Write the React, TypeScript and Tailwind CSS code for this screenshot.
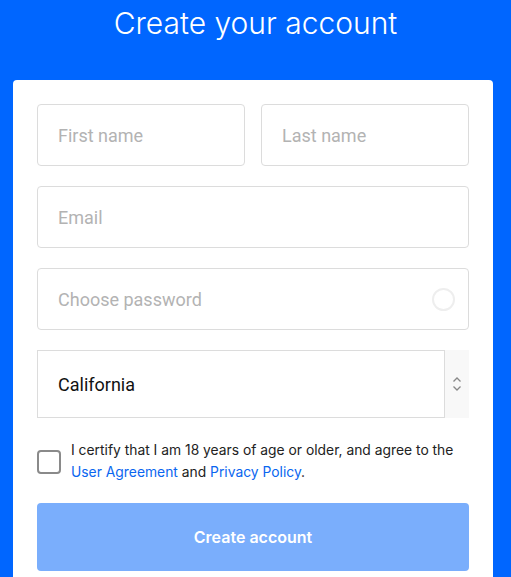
import React from "react";

export default function App() {
  return (
    <div className="min-h-[577px] w-[511px] bg-[#0066ff] overflow-hidden" style={{ fontFamily: "Inter, 'Noto Sans', sans-serif" }}>
      <h1 className="text-center text-white text-[30px] font-light leading-[46px] pt-[0px]">Create your account</h1>
      <div className="mt-[34px] mx-[13px] w-[480px] bg-white rounded-t-[4px] px-[24px] pt-[24px] pb-[10px]">
        <div className="flex gap-[16px]">
          <div className="flex-1 h-[62px] border border-[#dcdcdc] rounded-[4px] flex items-center px-[20px] text-[18px] text-[#b3b3b3]" style={{ fontFamily: "Roboto, sans-serif" }}>First name</div>
          <div className="flex-1 h-[62px] border border-[#dcdcdc] rounded-[4px] flex items-center px-[20px] text-[18px] text-[#b3b3b3]" style={{ fontFamily: "Roboto, sans-serif" }}>Last name</div>
        </div>
        <div className="mt-[20px] h-[62px] border border-[#dcdcdc] rounded-[4px] flex items-center px-[20px] text-[18px] text-[#b3b3b3]" style={{ fontFamily: "Roboto, sans-serif" }}>Email</div>
        <div className="mt-[20px] h-[62px] border border-[#dcdcdc] rounded-[4px] flex items-center justify-between pl-[20px] pr-[13px] text-[18px] text-[#b3b3b3]" style={{ fontFamily: "Roboto, sans-serif" }}>
          <span>Choose password</span>
          <span className="w-[23px] h-[23px] rounded-full border-2 border-[#eeeeee]"></span>
        </div>
        <div className="mt-[20px] h-[68px] flex">
          <div className="flex-1 border border-[#dcdcdc] flex items-center px-[20px] text-[18px] text-[#111]" style={{ fontFamily: "Roboto, sans-serif" }}>California</div>
          <div className="w-[24px] bg-[#f8f8f8] flex items-center justify-center">
            <svg width="10" height="16" viewBox="0 0 10 16" fill="none" stroke="#888" strokeWidth="1.3">
              <path d="M1.5 5.5 L5 2 L8.5 5.5" />
              <path d="M1.5 10.5 L5 14 L8.5 10.5" />
            </svg>
          </div>
        </div>
        <div className="mt-[21px] flex gap-[10px]">
          <div className="mt-[11px] w-[24px] h-[24px] shrink-0 rounded-[4px] border-2 border-[#8a8a8a]"></div>
          <p className="text-[13.85px] leading-[22px] text-[#222]">
            I certify that I am 18 years of age or older, and agree to the{" "}
            <span className="text-[#0a66f0]">User Agreement</span> and{" "}
            <span className="text-[#0a66f0]">Privacy Policy</span>.
          </p>
        </div>
        <div className="mt-[20px] h-[68px] rounded-[4px] bg-[#7aaefc] flex items-center justify-center text-white text-[16px] font-semibold">Create account</div>
      </div>
    </div>
  );
}
